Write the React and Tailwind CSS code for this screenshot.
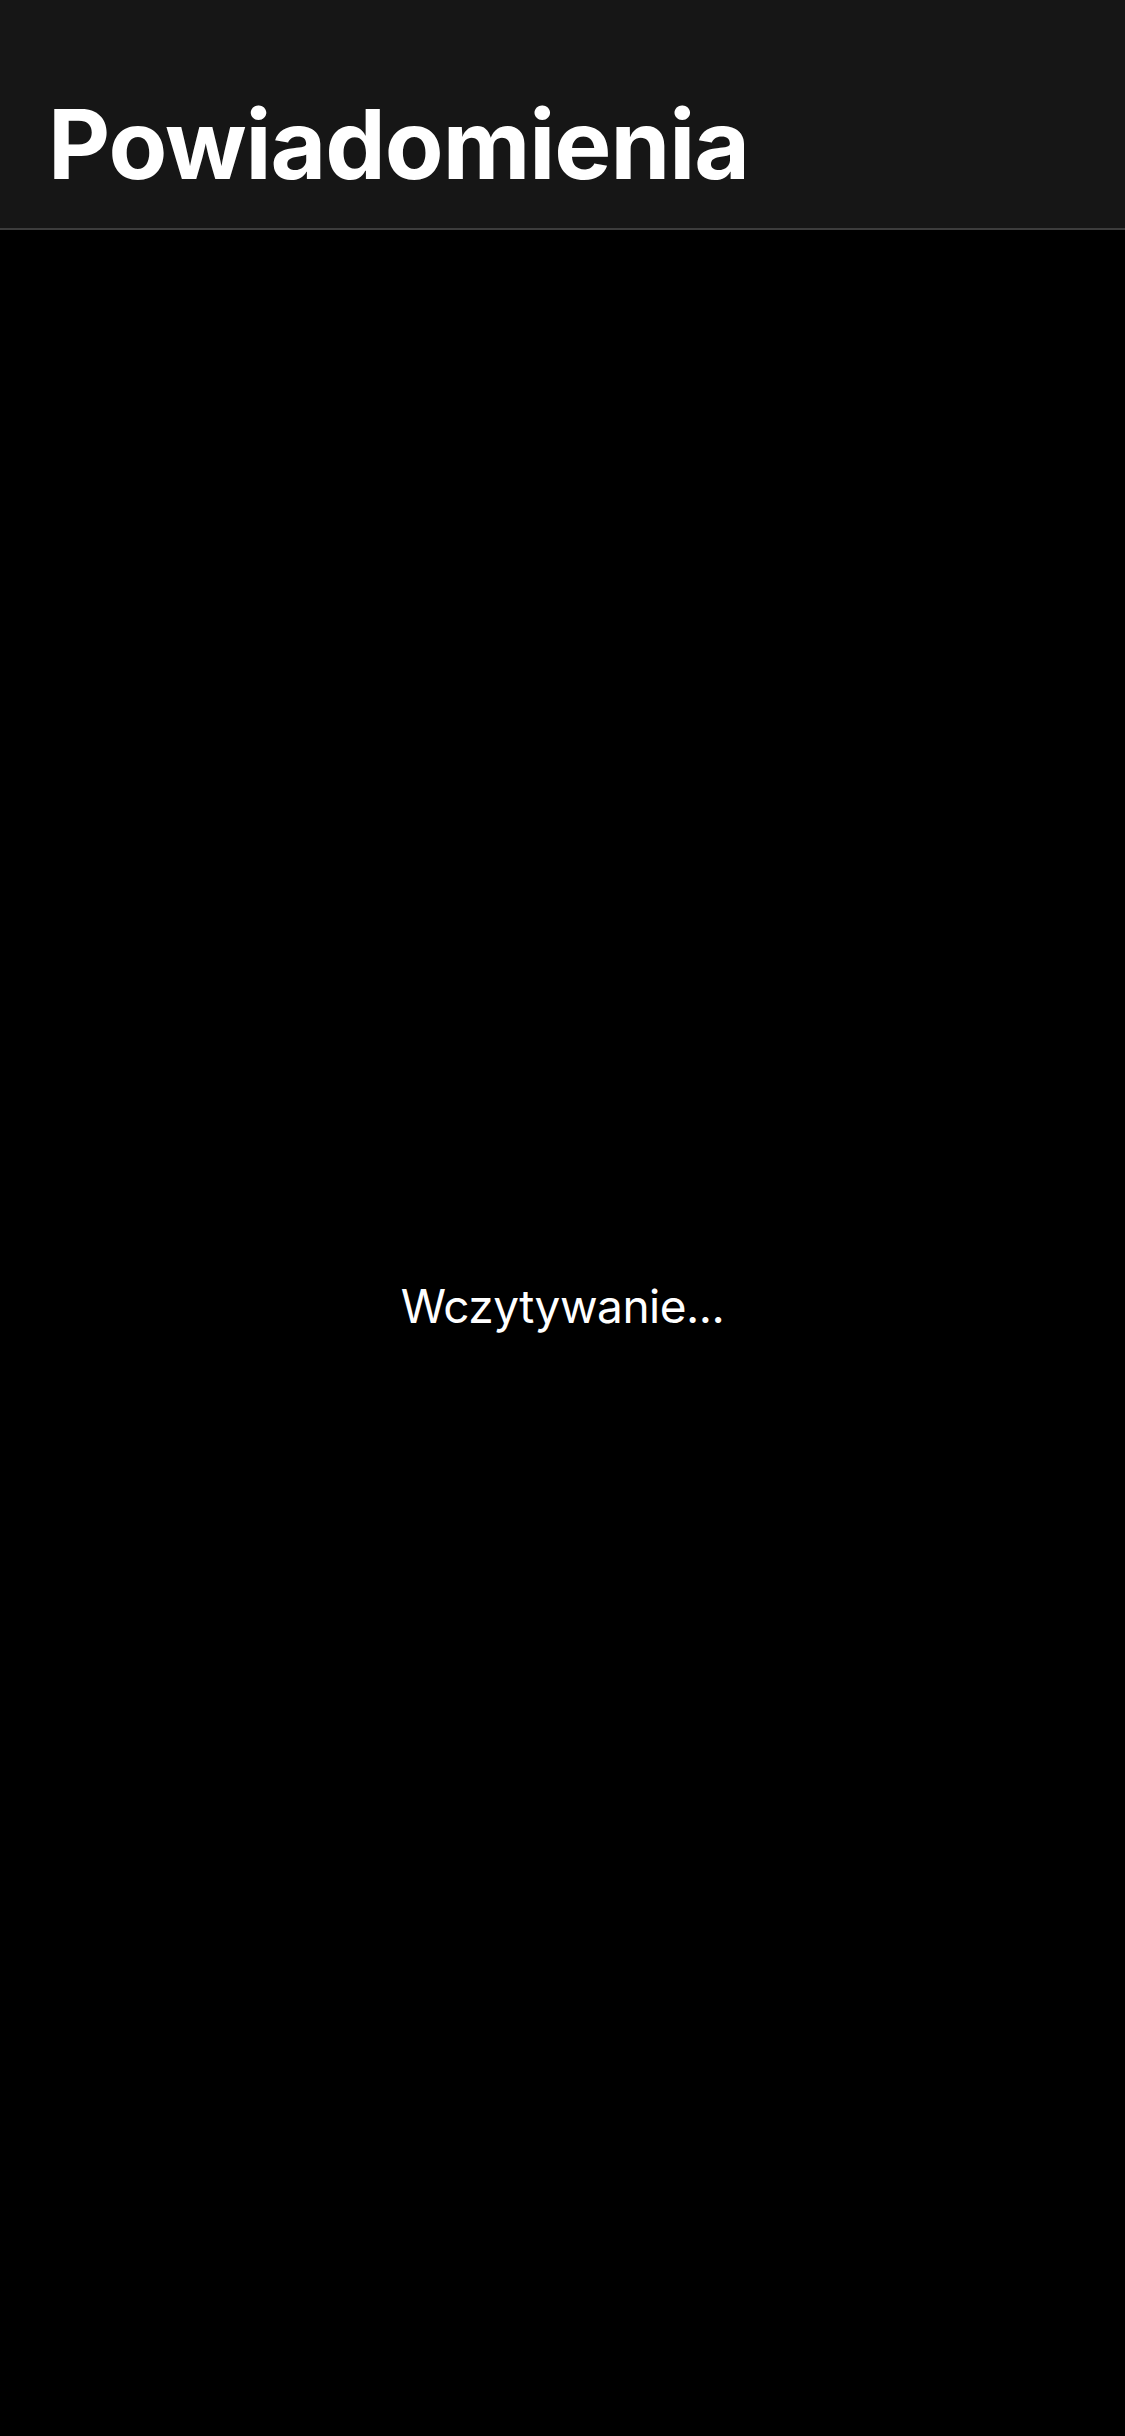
export default function App() {
  return (
    <div className="w-[1125px] h-[2436px] bg-black flex flex-col" style={{ fontFamily: 'Inter, "Noto Sans", sans-serif' }}>
      <div className="h-[230px] bg-[#161616] border-b-[2px] border-[#3c3c3c] flex items-end px-[48px] pb-[36px]">
        <h1 className="text-white font-bold text-[96px] leading-none tracking-[-1px]">Powiadomienia</h1>
      </div>
      <div className="flex-1 flex items-center justify-center pb-[54px]">
        <span className="text-white text-[46px] leading-none tracking-[-0.5px]">Wczytywanie...</span>
      </div>
    </div>
  );
}
